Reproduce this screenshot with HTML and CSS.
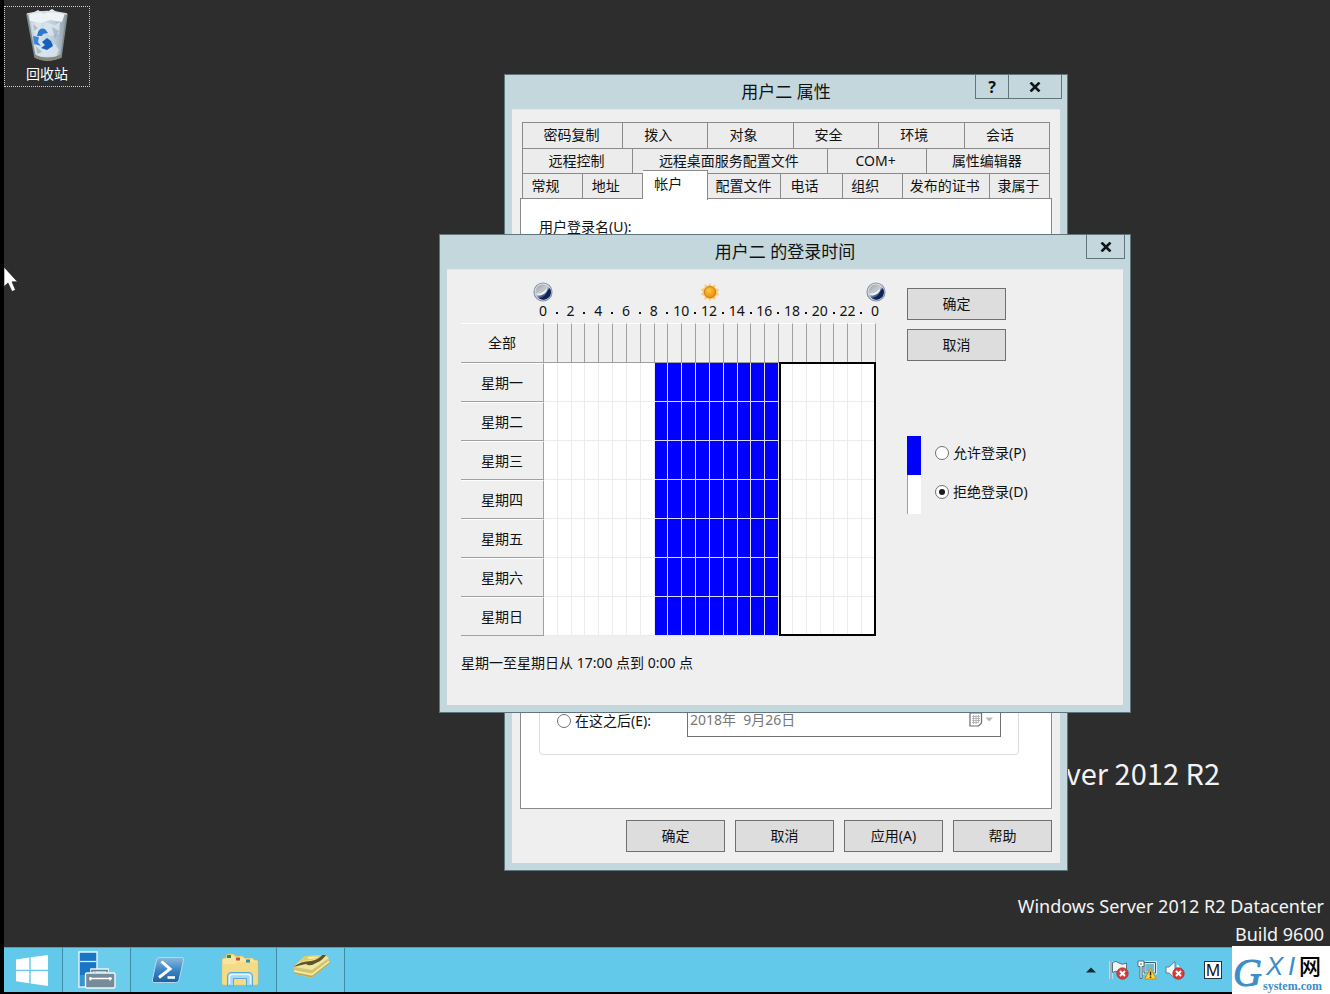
FILE: index.html
```html
<!DOCTYPE html>
<html lang="zh-CN">
<head>
<meta charset="utf-8">
<title>用户二 的登录时间</title>
<link rel="stylesheet" href="styles.css">
</head>
<body>
<svg width="0" height="0" class="defs" aria-hidden="true">
  <defs>
    <linearGradient id="moonFill" x1="0.2" y1="0.1" x2="0.8" y2="0.9">
      <stop offset="0" stop-color="#a9adae"/><stop offset="0.4" stop-color="#c6cbd0"/><stop offset="0.6" stop-color="#5c7093"/><stop offset="1" stop-color="#122a5c"/>
    </linearGradient>
    <radialGradient id="sunFill" cx="0.4" cy="0.35" r="0.7">
      <stop offset="0" stop-color="#ffc83c"/><stop offset="1" stop-color="#ec8606"/>
    </radialGradient>
    <linearGradient id="binFill" x1="0" y1="0" x2="1" y2="0">
      <stop offset="0" stop-color="#a9b4bb"/><stop offset="0.25" stop-color="#dbe6ee"/><stop offset="0.7" stop-color="#b9cbd9"/><stop offset="1" stop-color="#8b989e"/>
    </linearGradient>
    <linearGradient id="psFill" x1="0" y1="0" x2="0" y2="1">
      <stop offset="0" stop-color="#8cb8dd"/><stop offset="0.5" stop-color="#3c86c4"/><stop offset="1" stop-color="#1c5fa5"/>
    </linearGradient>
    <linearGradient id="noteFill" x1="0" y1="0" x2="1" y2="1">
      <stop offset="0" stop-color="#e9d77c"/><stop offset="1" stop-color="#f6efb0"/>
    </linearGradient>
    <symbol id="moon" viewBox="0 0 20 20">
      <circle cx="10" cy="10" r="9" fill="#dde4ec" stroke="#8795ab" stroke-width="1.2"/>
      <circle cx="10" cy="10" r="7.600" fill="url(#moonFill)"/>
      <path d="M16.800 6A7.600 7.600 0 0 1 6 16.300Q12.500 15 14.500 9Z" fill="#0e2454"/>
      <path d="M3 11.500Q8.500 12.500 14.500 5.500Q14.500 10.500 9.500 12.800Q5 14.500 3 11.500Z" fill="#eef2f6"/>
    </symbol>
  </defs>
</svg>

<div class="screen">
  <main class="desktop">
    <a class="desktop-icon" href="#recycle">
      <svg width="44" height="54" viewBox="0 0 44 54" aria-hidden="true">
        <path d="M2 6Q22 0 42 6L36 49Q22 56 10 49Z" fill="url(#binFill)"/>
        <path d="M4 7L13 2L19 6L27 1L33 5L40 5L37 14L25 12L16 15L5 13Z" fill="#eef3f6"/>
        <path d="M6 14L16 18L14 26L8 24ZM20 14L30 17L35 14L34 26L25 28L18 22ZM18 40L30 36L34 42L31 49L15 48Z" fill="#d9e6ef" opacity=".8"/>
        <path d="M27 19L34 23L30 31ZM11 38L17 44L12 46ZM8 16L13 20L9 23Z" fill="#8fa6b8" opacity=".6"/>
        <path d="M2 6L10 49Q22 55 36 49L42 6" fill="none" stroke="#7d8b92" stroke-width="1.6"/>
        <path d="M9 46Q22 53 37 46L36 50Q22 56 10 50Z" fill="#898b7b"/>
        <path d="M2 6Q22 1 42 6" fill="none" stroke="#d7dee0" stroke-width="1.5"/>
        <path d="M13 24Q15 19 20 21L23 25L18 26L17 28L12 28Z" fill="#2e79d0"/>
        <path d="M8 28L14 29L13 34L16 38L9 36Z" fill="#3b87da"/>
        <path d="M17 34L22 30L26 33L28 38L22 42L16 40L20 37Z" fill="#1461bd"/>
      </svg>
      <span>回收站</span>
    </a>

    <div class="brand">Windows Server 2012 R2</div>
    <div class="build">Windows Server 2012 R2 Datacenter<br>Build 9600</div>

    <section class="window properties" aria-labelledby="props-title">
      <header class="titlebar">
        <h1 id="props-title">用户二 属性</h1>
        <div class="caption-buttons">
          <button class="caption help" type="button">?</button>
          <button class="caption wide" type="button" aria-label="关闭"><svg width="12" height="10" viewBox="0 0 12 10"><path d="M1.5 .5L10.5 9.5M10.5 .5L1.5 9.5" stroke="#10181c" stroke-width="2.6"/></svg></button>
        </div>
      </header>
      <div class="client">
        <nav class="tabs">
          <div class="tab-row row-a">
            <button type="button">密码复制</button><button class="short" type="button">拨入</button><button class="short" type="button">对象</button><button class="short" type="button">安全</button><button class="short" type="button">环境</button><button class="short" type="button">会话</button>
          </div>
          <div class="tab-row row-b">
            <button type="button">远程控制</button><button type="button">远程桌面服务配置文件</button><button type="button">COM+</button><button type="button">属性编辑器</button>
          </div>
          <div class="tab-row row-c">
            <button class="short" type="button">常规</button><button class="short" type="button">地址</button><button class="short active" type="button">帐户</button><button type="button">配置文件</button><button class="short" type="button">电话</button><button class="short" type="button">组织</button><button type="button">发布的证书</button><button type="button">隶属于</button>
          </div>
        </nav>
        <div class="panel">
          <div class="field-label">用户登录名(U):</div>
          <div class="expiry">
            <label class="radio"><input type="radio" name="expiry"><span>在这之后(E):</span></label>
            <div class="date-box">
              <input class="date" type="text" value="2018年  9月26日" aria-label="到期日期" disabled>
              <svg width="25" height="15" viewBox="0 0 25 15" aria-hidden="true"><path d="M1 1H12.5V11L9.5 14H1Z" fill="#fff" stroke="#6f6f6f" stroke-width="1.2"/><path d="M3 4.5H11M3 6.5H11M3 8.5H11M3 10.5H9M4.500 3V12M7 3V12M9.500 3V11" stroke="#a8a8a8" stroke-width=".8"/><path d="M16.500 5.500H24L20.200 9.500Z" fill="#b9b9b9"/></svg>
            </div>
          </div>
        </div>
        <footer class="actions">
          <button class="btn" type="button">确定</button>
          <button class="btn" type="button">取消</button>
          <button class="btn" type="button">应用(A)</button>
          <button class="btn" type="button">帮助</button>
        </footer>
      </div>
    </section>

    <section class="window logon" aria-labelledby="logon-title">
      <header class="titlebar">
        <h1 id="logon-title">用户二 的登录时间</h1>
        <div class="caption-buttons">
          <button class="caption" type="button" aria-label="关闭"><svg width="12" height="10" viewBox="0 0 12 10"><path d="M1.5 .5L10.5 9.5M10.5 .5L1.5 9.5" stroke="#10181c" stroke-width="2.6"/></svg></button>
        </div>
      </header>
      <div class="client logon-body">
        <div class="schedule">
          <div class="sky">
            <svg width="20" height="20"><use href="#moon"/></svg>
            <svg width="20" height="20" viewBox="0 0 20 20"><path d="M10 .8L11.800 4.300L15.300 2.400L15.300 5.900L19.200 7.600L17.200 10L19.200 13L15.500 14L15 18L11.800 16.300L10 19.300L8.200 16.300L4.500 17.800L4.500 14L.8 12.700L2.900 10L.8 7.200L4.500 6L4.700 2.300L8.200 4.100Z" fill="#f8bd50" opacity=".75"/><circle cx="10" cy="10.200" r="5.700" fill="url(#sunFill)" stroke="#c9780f" stroke-width=".9"/></svg>
            <svg width="20" height="20"><use href="#moon"/></svg>
          </div>
          <div class="hours" id="hours"></div>
          <div class="grid-wrap">
            <table class="grid" aria-label="登录时间">
              <thead id="all"></thead>
              <tbody id="days"></tbody>
            </table>
            <div class="selection" aria-hidden="true"><div></div></div>
          </div>
          <p class="status">星期一至星期日从 17:00 点到 0:00 点</p>
        </div>
        <aside class="side">
          <button class="btn" type="button">确定</button>
          <button class="btn" type="button">取消</button>
          <div class="legend">
            <div class="swatch"><i class="allow"></i><i class="deny"></i></div>
            <div class="choices">
              <label class="radio"><input type="radio" name="logon"><span>允许登录(P)</span></label>
              <label class="radio"><input type="radio" name="logon" checked><span>拒绝登录(D)</span></label>
            </div>
          </div>
        </aside>
      </div>
    </section>

    <svg class="cursor" width="14" height="26" viewBox="0 0 14 26" aria-hidden="true"><path d="M0 0V19.500L4 16L8 24.500L11.500 23L8 14.800H13.500Z" fill="#fff" stroke="#111" stroke-width=".6"/></svg>
  </main>

  <footer class="taskbar">
    <button class="task start" type="button" aria-label="开始"><svg width="32" height="31" viewBox="0 0 32 31"><path d="M0 4.500L13.300 2.500V14.700H0ZM14.700 2.300L32 0V14.700H14.700ZM0 16H13.300V28.300L0 26.300ZM14.700 16H32V31L14.700 28.500Z" fill="#fff"/></svg></button>
    <button class="task open" type="button" aria-label="服务器管理器"><svg width="38" height="38" viewBox="0 0 38 38"><path d="M1 1H19V36H1Z" fill="#1976c4" stroke="#e6f5fc" stroke-width="1.400"/><path d="M2 10.500H18" stroke="#d6edf9" stroke-width="1.300"/><path d="M2 24H18V35H2Z" fill="#58bbe4" opacity=".45"/><path d="M14 23V19H29V23" fill="none" stroke="#eaf4f8" stroke-width="3.600"/><path d="M14 23V19.500H29V23" fill="none" stroke="#6b7d88" stroke-width="1.600"/><rect x="7.500" y="22" width="29.500" height="15" rx="1.500" fill="#788b98" stroke="#f1f8fb" stroke-width="1.400"/><path d="M11 27.500H34M12.500 26V29.500M32 26V29.500" stroke="#fff" stroke-width="1.600"/></svg></button>
    <button class="task plain" type="button" aria-label="PowerShell"><svg width="34" height="28" viewBox="0 0 34 28"><path d="M8 1.500H31Q33 1.500 32.500 4L28 24Q27.500 26.500 25 26.500H3Q.8 26.500 1.400 24L5.500 4Q6 1.500 8 1.500Z" fill="url(#psFill)" stroke="#b4d8ea" stroke-width="1"/><path d="M10.500 5.500L19 13L8 21.500" fill="none" stroke="#fff" stroke-width="3"/><path d="M16.500 21.500H24" stroke="#fff" stroke-width="2.600"/></svg></button>
    <button class="task plain" type="button" aria-label="文件资源管理器"><svg width="38" height="34" viewBox="0 0 38 34"><path d="M5 3Q5 1 7 1H12Q14 1 14 3H21Q23 3 23 5H31Q33 5 33 7H36Q37 7 37 9V30Q37 32 35 32H3Q1 32 1 30V7Q1 5 3 5H5Z" fill="#f6e6a2" stroke="#d3b65c" stroke-width=".8"/><path d="M1.500 11H14L16 9H36.500V30Q36.500 31.500 35 31.500H3Q1.500 31.500 1.500 30Z" fill="#f4dc87"/><path d="M6 3.500H10" stroke="#2f8f3a" stroke-width="3"/><path d="M15 6H19" stroke="#cf4a30" stroke-width="3"/><path d="M25 8H29" stroke="#2c8fb0" stroke-width="3"/><path d="M6.500 33V23Q6.500 19.500 10 19.500H28Q31.500 19.500 31.500 23V33H25.500V25.500H12.500V33Z" fill="#a5d9f4" stroke="#57a9d8"/><path d="M8.500 31V24Q8.500 21.500 11 21.500H27Q29.500 21.500 29.500 24V31" fill="none" stroke="#e3f6fd" stroke-width="1.500"/></svg></button>
    <button class="task open note" type="button" aria-label="用户和计算机"><svg width="38" height="26" viewBox="0 0 38 26"><path d="M1 13L20 16L37 4L37 10L20 24L3 20Z" fill="#d5c46c"/><path d="M1 13L13 2L33 1L37 4L20 16Z" fill="url(#noteFill)"/><path d="M2 17L20 20.500L37 7.500" fill="none" stroke="#f5efb4" stroke-width="1.400"/><path d="M2 19L20 22.700L37 9.500" fill="none" stroke="#a7934a" stroke-width=".7"/><path d="M1 13Q9 11 14 10Q18 13 24 9Q31 6 34 1L30 1Q26 6 19 7Q9 7 1 13Z" fill="#5d542a"/><path d="M7 9L13 2L30 1Q26 5 18 6Q11 6 7 9Z" fill="#dfca68"/><path d="M15 3L27 2.500Q23 5 17 5Z" fill="#f7f0b3"/></svg></button>
    <div class="tray">
      <svg width="10" height="6" viewBox="0 0 10 6"><path d="M0 5.500L5 .5L10 5.500Z" fill="#172a33"/></svg>
      <svg width="20" height="20" viewBox="0 0 20 20"><path d="M2 1V19" stroke="#eff9fc" stroke-width="3"/><path d="M2 1V19" stroke="#506e7c" stroke-width="1"/><path d="M3.500 2.500Q7 0 10 3Q13 5.500 17.500 3V13Q13 15 10 12.500Q7 10 3.500 12.500Z" fill="#eef5f7" stroke="#57717f"/><circle cx="13.500" cy="13.500" r="5.700" fill="#df3b36" stroke="#a9201f" stroke-width=".7"/><path d="M11 11L16 16M16 11L11 16" stroke="#fff" stroke-width="1.900"/></svg>
      <svg width="20" height="20" viewBox="0 0 20 20"><path d="M7 2.500H18.500V13H7Z" fill="#70b9d4" stroke="#f1f8fa" stroke-width="2.600"/><path d="M7 2.500H18.500V13H7ZM8 17H14" fill="none" stroke="#3d5965"/><path d="M1 1H7V6.500H5V18.500H3V6.500H1Z" fill="#fff" stroke="#52707c"/><path d="M4 3V5" stroke="#52707c"/><path d="M13.500 8.500L19.300 19H7.700Z" fill="#ffd43d" stroke="#c49312"/><path d="M13.500 11.500V15.500M13.500 16.500V18" stroke="#302910" stroke-width="1.500"/></svg>
      <svg width="20" height="20" viewBox="0 0 20 20"><path d="M1 7H4L10 1.500V18.500L4 13H1Z" fill="#f5fafb" stroke="#607d8b"/><path d="M12 5Q14 7 14 9" fill="none" stroke="#fff" stroke-width="1.600"/><circle cx="13.500" cy="13.500" r="5.700" fill="#df3b36" stroke="#a9201f" stroke-width=".7"/><path d="M11 11L16 16M16 11L11 16" stroke="#fff" stroke-width="1.900"/></svg>
      <span class="ime">M</span>
    </div>
  </footer>

  <svg class="site-mark" width="98" height="48" viewBox="0 0 98 48" aria-label="GXI网 system.com">
    <rect width="98" height="48" fill="#fff"/>
    <text class="mark-g" x="1" y="40">G</text>
    <text class="mark-xi" x="34" y="29">X</text>
    <text class="mark-xi" x="56" y="29">I</text>
    <text class="mark-net" x="67" y="28">网</text>
    <text class="mark-dom" x="31" y="44">system.com</text>
  </svg>
</div>
<script src="app.js"></script>
</body>
</html>
```

FILE: styles.css
```css
* { box-sizing: border-box; }

body {
  margin: 0;
  background: #000;
  color: #111;
  font: 14px/20px "Noto Sans", "Noto Sans CJK SC", sans-serif;
}

button, input { font: inherit; color: inherit; }
button { padding: 0; margin: 0; border: 0; background: none; }
.defs { position: absolute; }

.screen {
  position: relative;
  display: flex;
  flex-direction: column;
  min-height: 100vh;
  padding: 0 0 2px 4px;
  overflow: hidden;
}

.desktop {
  position: relative;
  flex: 1;
  background: #2d2d2d;
}

.desktop-icon {
  position: absolute;
  left: 0;
  top: 6px;
  display: flex;
  flex-direction: column;
  align-items: center;
  width: 86px;
  padding: 1px 0 0;
  border: 1px dotted #d0d0d0;
  color: #fff;
  text-decoration: none;
}
.desktop-icon svg { display: block; }
.desktop-icon span { line-height: 24px; }

.brand {
  position: absolute;
  right: 110px;
  bottom: 153px;
  color: #f2f2f2;
  font: 400 29px/44px "Noto Sans CJK SC", sans-serif;
}

.build {
  position: absolute;
  right: 6px;
  bottom: -1px;
  color: #f4f4f4;
  font-size: 18px;
  line-height: 28px;
  text-align: right;
}

.cursor { position: absolute; left: 0; top: 267px; }

/* Windows */
.window {
  position: absolute;
  display: flex;
  flex-direction: column;
  padding: 0 7px 7px;
  background: #c3d7dc;
  border: 1px solid #5f757e;
}
.properties { left: 500px; top: 74px; width: 564px; height: 797px; }
.logon { left: 435px; top: 234px; width: 692px; height: 479px; }

.titlebar {
  position: relative;
  display: flex;
  justify-content: center;
  height: 34px;
}
.titlebar h1 {
  margin: 0;
  font-size: 17px;
  font-weight: 400;
  line-height: 33px;
}
.caption-buttons {
  position: absolute;
  right: -2px;
  top: -1px;
  display: flex;
}
.caption {
  display: flex;
  align-items: center;
  justify-content: center;
  width: 39px;
  height: 25px;
  border: 1px solid #5f757e;
}
.caption.wide { width: 53px; border-left: 0; }
.caption.help { width: 34px; font-size: 16px; font-weight: 700; }

.client {
  flex: 1;
  background: #efefef;
  border-top: 1px solid #dfe6e8;
}

.btn {
  width: 99px;
  height: 32px;
  padding-bottom: 1px;
  background: #ddd;
  border: 1px solid #707070;
}

.radio { display: flex; align-items: center; gap: 4px; }
.radio input {
  appearance: none;
  display: grid;
  place-items: center;
  width: 14px;
  height: 14px;
  margin: 0;
  background: #fff;
  border: 1px solid #707070;
  border-radius: 50%;
}
.radio input:checked::before {
  content: "";
  width: 6px;
  height: 6px;
  border-radius: 50%;
  background: #1b1b1b;
}

/* Properties window */
.properties .client {
  display: flex;
  flex-direction: column;
  padding: 12px 8px 11px;
}
.tabs { padding: 0 2px; }
.tab-row {
  display: grid;
  border-left: 1px solid #8a8a8a;
}
.row-a { grid-template-columns: 100fr 85fr 85fr 85fr 86fr 85fr; }
.row-b { grid-template-columns: 110fr 194fr 99fr 123fr; }
.row-c { grid-template-columns: 60fr 60fr 65fr 73fr 61fr 60fr 87fr 60fr; }
.tab-row button {
  height: 25px;
  padding-right: 2px;
  border: solid #8a8a8a;
  border-width: 1px 1px 0 0;
  background: #ececec;
  white-space: nowrap;
}
.row-a button { height: 26px; padding-bottom: 1px; }
.tab-row .short { padding-right: 14px; }
.tab-row .active {
  z-index: 1;
  height: 30px;
  margin: -3px 0 -2px;
  padding-bottom: 3px;
  background: #fff;
}
.panel {
  display: flex;
  flex: 1;
  flex-direction: column;
  padding: 18px 32px 53px 18px;
  border: 1px solid #8a8a8a;
  background: #fff;
}
.expiry {
  display: flex;
  align-items: flex-end;
  gap: 36px;
  height: 120px;
  margin-top: auto;
  padding: 0 17px 17px;
  border: 1px solid #dcdcdc;
  border-radius: 4px;
}
.expiry .radio { height: 32px; white-space: nowrap; }
.date-box {
  display: flex;
  flex: 1;
  align-items: center;
  height: 35px;
  padding: 0 6px 0 2px;
  border: 1px solid #707070;
}
.date {
  flex: 1;
  min-width: 0;
  padding: 0;
  border: 0;
  background: none;
  color: #777;
  white-space: pre;
}
.actions {
  display: flex;
  justify-content: flex-end;
  gap: 10px;
  margin-top: 11px;
}

/* Logon hours window */
.logon-body {
  display: flex;
  align-items: flex-start;
  gap: 31px;
  padding: 12px 14px 0;
}
.schedule { width: 415px; }
.sky {
  display: flex;
  justify-content: space-between;
  margin: 0 -10px 0 72px;
}
.hours {
  display: grid;
  grid-template-columns: repeat(25, 1fr);
  height: 21px;
  margin: 0 -6px 0 75px;
  line-height: 18px;
}
.hours span {
  display: flex;
  justify-content: center;
  min-width: 0;
}
.hours .half::before {
  content: "";
  align-self: center;
  width: 2px;
  height: 2px;
  background: #111;
}
.grid-wrap { position: relative; }
.grid, .grid thead, .grid tbody { display: block; }
.grid tr, .selection {
  display: grid;
  grid-template-columns: 83px repeat(24, 1fr);
}
.grid tr { height: 39px; }
.grid thead tr { height: 40px; }
.grid th, .grid td { padding: 0; }
.grid th {
  border: solid;
  border-width: 1px 1px 1px 0;
  border-color: #fff #a0a0a0 #a0a0a0;
  font-weight: 400;
  line-height: 37px;
}
.grid td {
  background: #fff;
  border: solid #ececec;
  border-width: 0 1px 1px 0;
}
.grid thead td {
  background: #efefef;
  border-color: #a0a0a0;
  border-width: 1px 1px 1px 0;
  border-top-color: #fff;
}
.grid .on { background: #00f; border-color: #dcdcff; }
.selection {
  position: absolute;
  inset: 39px 0 0;
  pointer-events: none;
}
.selection div {
  grid-column: 19 / 26;
  border: 2px solid #000;
}
.status { margin: 17px 0 0; }

.side { padding-top: 6px; }
.side .btn { display: block; margin-bottom: 9px; }
.legend { display: flex; gap: 14px; margin-top: 75px; }
.swatch { width: 14px; }
.swatch i { display: block; height: 39px; }
.swatch .allow { background: #00f; }
.swatch .deny { background: #fff; border-left: 1px solid #a0a0a0; }
.choices .radio { height: 39px; padding-bottom: 5px; }

/* Taskbar */
.taskbar {
  display: flex;
  height: 45px;
  background: #62c9ea;
  border-top: 1px solid #4c9fb9;
}
.task {
  display: flex;
  align-items: center;
  justify-content: center;
  width: 72px;
}
.task.start { width: 58px; padding-right: 2px; }
.task.open {
  width: 69px;
  border: solid #3f8ca6;
  border-width: 0 1px;
  background: #6bcceb;
}
.task.plain { padding-right: 2px; }
.task.plain:nth-of-type(3) { width: 74px; padding-right: 0; }
.task.note { margin-left: -1px; padding-bottom: 6px; }
.tray {
  display: flex;
  align-items: center;
  gap: 8px;
  margin-left: auto;
  padding-right: 108px;
}
.tray svg:first-child { margin-right: 5px; }
.ime {
  width: 18px;
  height: 18px;
  margin-left: 11px;
  border: 1px solid #26353c;
  background: #fff;
  font-size: 16px;
  line-height: 16px;
  text-align: center;
}

.site-mark { position: absolute; right: 0; bottom: 0; }
.mark-g { font: italic 40px "Liberation Serif", serif; fill: #3c8dc8; stroke: #3c8dc8; stroke-width: 1; }
.mark-xi { font: italic 26px "Liberation Sans", sans-serif; fill: #3c8dc8; }
.mark-net { font: 500 22px "Noto Sans CJK SC", sans-serif; fill: #000; }
.mark-dom { font: bold 12px "Liberation Serif", serif; fill: #3c8dc8; }
```

FILE: app.js
```js
const HOURS = 24;
const ALLOWED_FROM = 8;
const ALLOWED_TO = 17;
const DAYS = ["星期一", "星期二", "星期三", "星期四", "星期五", "星期六", "星期日"];

const hours = document.getElementById("hours");
for (let h = 0; h <= HOURS; h++) {
  const mark = document.createElement("span");
  if (h % 2) mark.className = "half";
  else mark.textContent = h % HOURS;
  hours.append(mark);
}

function addRow(parent, label, isAllowed) {
  const row = document.createElement("tr");
  const head = document.createElement("th");
  head.scope = "row";
  head.textContent = label;
  row.append(head);
  for (let h = 0; h < HOURS; h++) {
    const cell = document.createElement("td");
    if (isAllowed(h)) cell.className = "on";
    row.append(cell);
  }
  parent.append(row);
}

addRow(document.getElementById("all"), "全部", () => false);
DAYS.forEach(day =>
  addRow(document.getElementById("days"), day, h => h >= ALLOWED_FROM && h < ALLOWED_TO));
```
